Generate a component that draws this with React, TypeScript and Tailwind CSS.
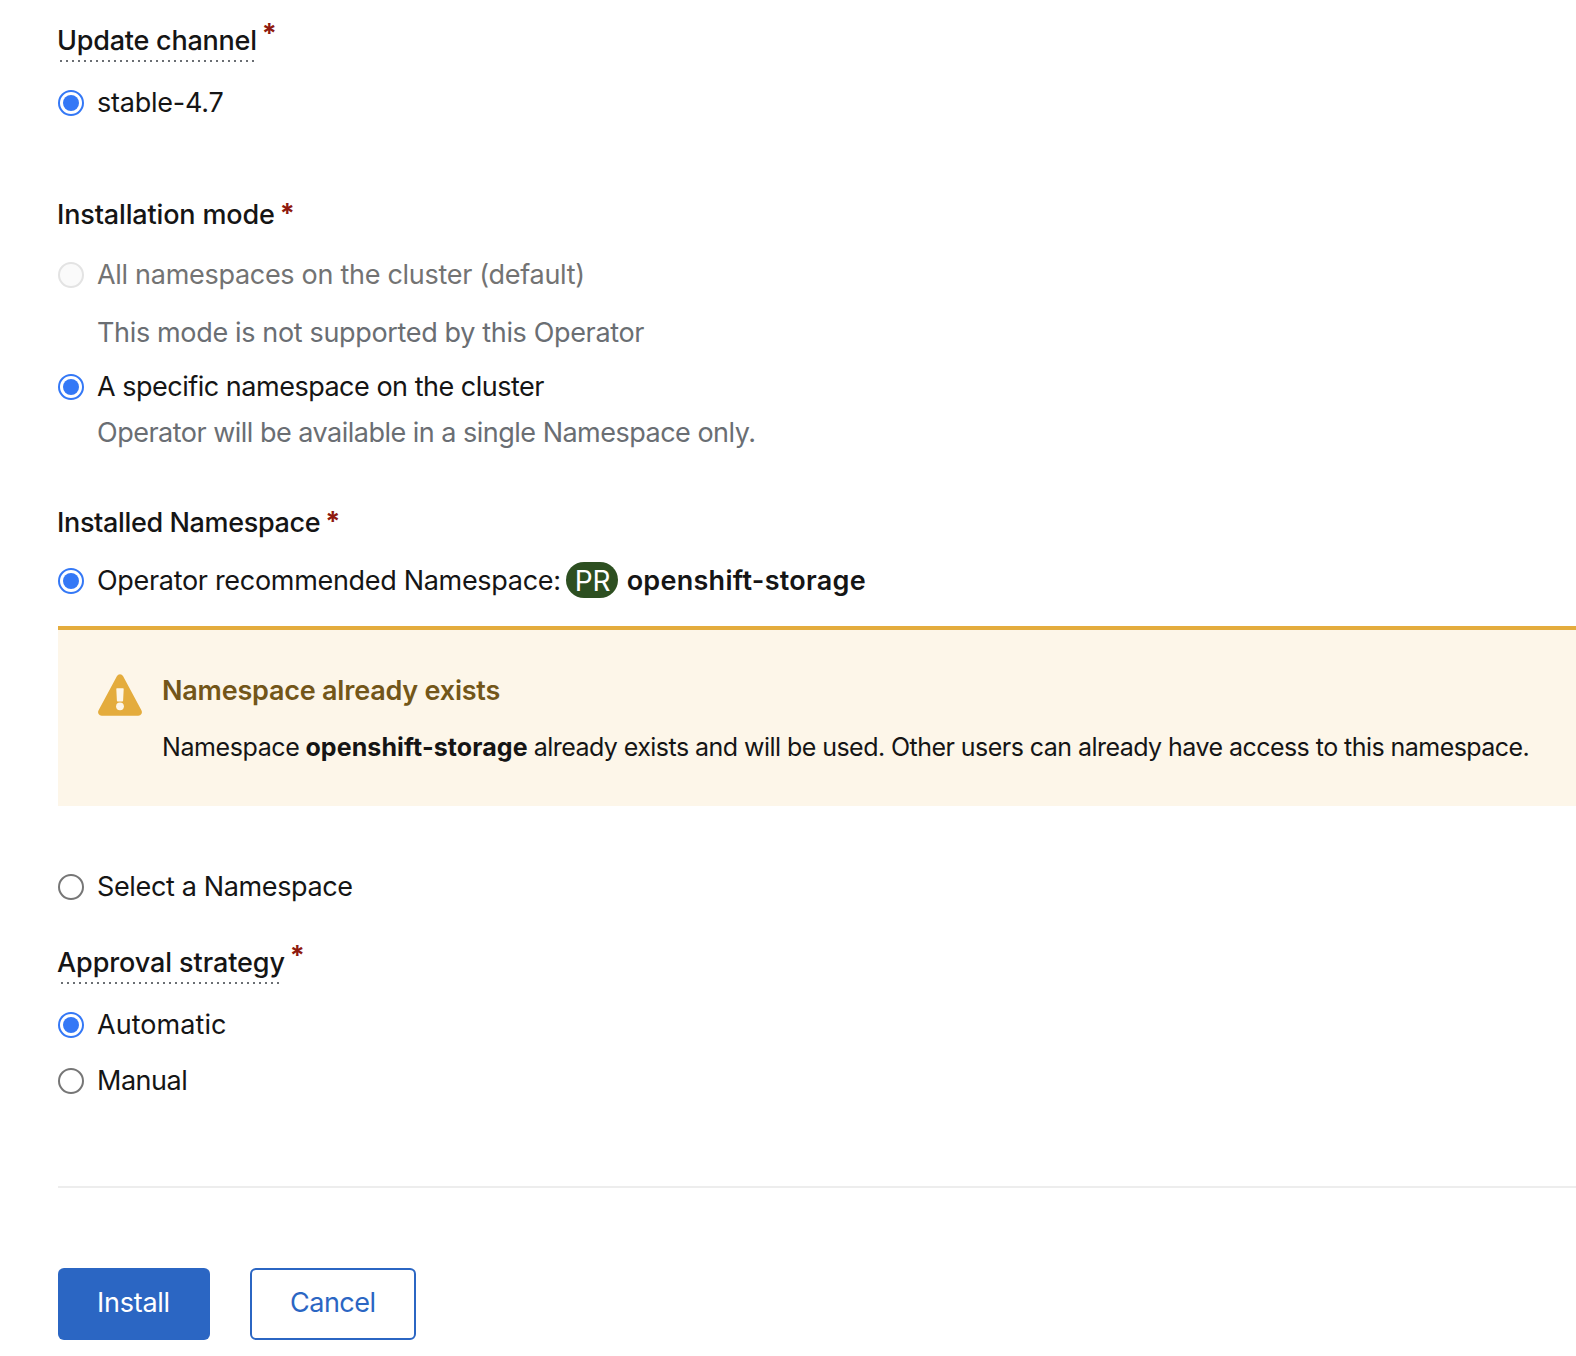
import type { ReactNode } from "react";

type RadioState = "checked" | "unchecked" | "disabled";

function Radio({ state }: { state: RadioState }) {
  if (state === "checked") {
    return (
      <span role="radio" aria-checked="true" className="flex size-[26px] shrink-0 items-center justify-center rounded-full border-2 border-[#3478f6] bg-white">
        <span className="size-4 rounded-full bg-[#3478f6]" />
      </span>
    );
  }
  if (state === "disabled") {
    return <span role="radio" aria-checked="false" aria-disabled="true" className="size-[26px] shrink-0 rounded-full border-2 border-[#e3e3e3] bg-[#fafafa]" />;
  }
  return <span role="radio" aria-checked="false" className="size-[26px] shrink-0 rounded-full border-2 border-[#767676] bg-white" />;
}

function RadioRow({ state, className, children }: { state: RadioState; className: string; children: ReactNode }) {
  return (
    <div className={`flex h-[42px] items-center gap-[13px] pt-[2px] whitespace-nowrap ${className}`}>
      <Radio state={state} />
      {children}
    </div>
  );
}

function Required({ className }: { className: string }) {
  return <span className={`text-[27px] leading-[42px] font-bold text-[#8f1a10] ${className}`}>*</span>;
}

function WarningIcon() {
  return (
    <svg viewBox="0 0 44 42" className="mt-[44px] h-[42px] w-[44px] shrink-0" aria-hidden="true">
      <path fill="#e4ac3d" d="M19 1.9a3.5 3.5 0 0 1 6 0L43.4 36.3a3.6 3.6 0 0 1-3.1 5.4H3.7a3.6 3.6 0 0 1-3.1-5.4z" />
      <path fill="#fdf6e9" d="M18.9 14.2h6.2q.6 0 .6.7l-.6 11.8q0 .8-.8.8h-4.6q-.8 0-.8-.8l-.6-11.8q0-.7.6-.7z" />
      <circle cx="22" cy="32.3" r="3.9" fill="#fdf6e9" />
    </svg>
  );
}

export default function App() {
  return (
    <main className="h-[1356px] w-full overflow-hidden bg-white pt-[19px] pl-[58px] font-['Inter',sans-serif] text-[27px] leading-[44px] text-[#151515]">
      <section>
        <div className="flex whitespace-nowrap">
          <div className="flex flex-col">
            <h2 className="-ml-px h-[41px] font-medium tracking-[-0.23px]">Update channel</h2>
            <div className="ml-[2px] h-[2px] w-[194px] bg-[repeating-linear-gradient(90deg,#6a6e73_0_2px,transparent_2px_6px)]" />
          </div>
          <Required className="-mt-[6px] ml-[5px] h-[42px]" />
        </div>
        <RadioRow state="checked" className="mt-[19px]">
          <span className="tracking-[-0.227px]">stable-4.7</span>
        </RadioRow>
      </section>

      <section className="mt-[70px]">
        <div className="flex h-[42px] whitespace-nowrap">
          <h2 className="-ml-px font-medium tracking-[-0.154px]">Installation mode</h2>
          <Required className="ml-[5px]" />
        </div>
        <RadioRow state="disabled" className="mt-[18px] text-[#737373]">
          <span className="tracking-[-0.294px]">All namespaces on the cluster (default)</span>
        </RadioRow>
        <p className="mt-4 ml-[39px] h-[42px] tracking-[-0.347px] whitespace-nowrap text-[#6a6e73]">This mode is not supported by this Operator</p>
        <RadioRow state="checked" className="mt-3">
          <span className="tracking-[-0.492px]">A specific namespace on the cluster</span>
        </RadioRow>
        <p className="mt-1 ml-[39px] h-[42px] tracking-[-0.511px] whitespace-nowrap text-[#6a6e73]">Operator will be available in a single Namespace only.</p>
      </section>

      <section className="mt-12">
        <div className="flex h-[42px] whitespace-nowrap">
          <h2 className="-ml-px font-medium tracking-[-0.36px]">Installed Namespace</h2>
          <Required className="ml-[5px]" />
        </div>
        <RadioRow state="checked" className="mt-4">
          <div className="flex items-center">
            <span className="tracking-[-0.311px]">Operator recommended Namespace:</span>
            <span className="-mt-[2px] ml-[5px] flex h-9 w-[52px] items-center justify-center rounded-[18px] bg-[#2d4f21] pt-[2px] pl-[2px] text-[28px] text-white">PR</span>
            <span className="ml-[9px] font-semibold tracking-[0.27px]">openshift-storage</span>
          </div>
        </RadioRow>
        <div className="mt-[25px] flex h-[180px] border-t-4 border-[#e4ac3d] bg-[#fdf6e9] pl-10 whitespace-nowrap">
          <WarningIcon />
          <div className="pt-[39px] pl-[20px]">
            <h3 className="h-[42px] font-semibold tracking-[-0.214px] text-[#735619]">Namespace already exists</h3>
            <p className="mt-[14px] flex h-[42px] text-[25px]">
              <span className="tracking-[-0.4px]">Namespace</span>
              <strong className="ml-[6px] tracking-[0.1px]">openshift-storage</strong>
              <span className="ml-[6px] tracking-[-0.545px]">already exists and will be used. Other users can already have access to this namespace.</span>
            </p>
          </div>
        </div>
        <RadioRow state="unchecked" className="mt-[59px]">
          <span className="tracking-[-0.36px]">Select a Namespace</span>
        </RadioRow>
      </section>

      <section className="mt-[34px]">
        <div className="flex whitespace-nowrap">
          <div className="flex flex-col">
            <h2 className="-ml-px h-[41px] font-medium tracking-[-0.09px]">Approval strategy</h2>
            <div className="ml-[3px] h-[2px] w-[219px] bg-[repeating-linear-gradient(90deg,#6a6e73_0_2px,transparent_2px_6px)]" />
          </div>
          <Required className="-mt-[6px] ml-[5px] h-[42px]" />
        </div>
        <RadioRow state="checked" className="mt-[19px]">
          <span className="tracking-[0.062px]">Automatic</span>
        </RadioRow>
        <RadioRow state="unchecked" className="mt-[14px]">
          <span className="tracking-[-0.5px]">Manual</span>
        </RadioRow>
      </section>

      <hr className="mt-[85px] border-t-2 border-[#ededed]" />

      <div className="mt-20 flex gap-10">
        <button type="button" className="h-[72px] w-[152px] rounded-md bg-[#2b66c3] pb-[2px] pl-[39px] text-left tracking-[-0.252px] text-white">Install</button>
        <button type="button" className="h-[72px] w-[166px] rounded-md border-2 border-[#2b66c3] bg-white pb-[2px] pl-[38px] text-left tracking-[-0.5px] text-[#2b66c3]">Cancel</button>
      </div>
    </main>
  );
}
